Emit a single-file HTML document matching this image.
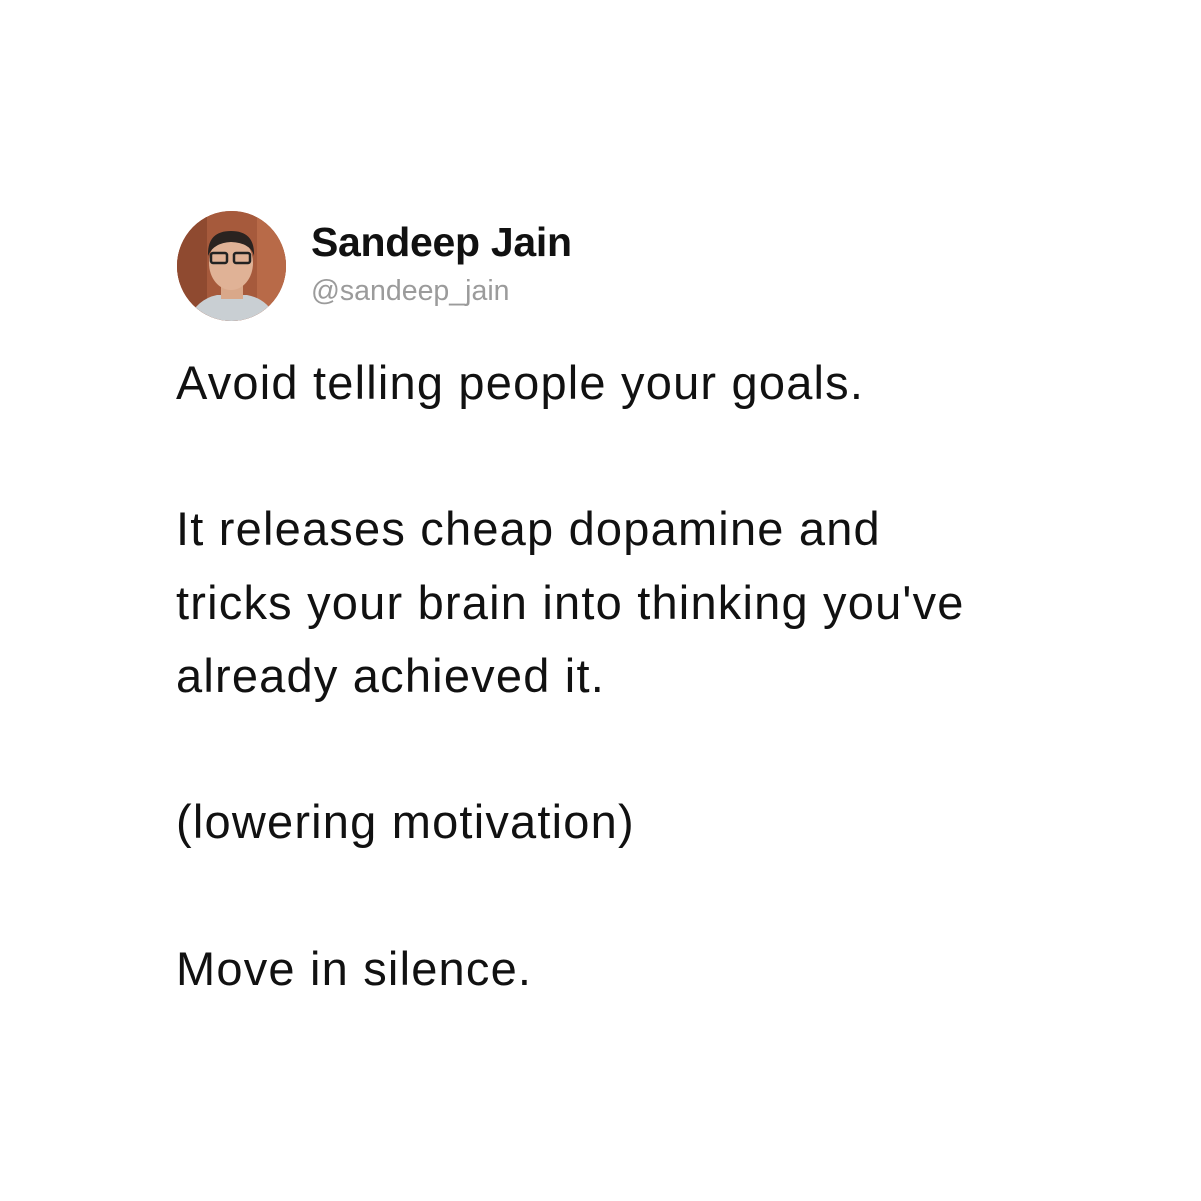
<!DOCTYPE html>
<html><head><meta charset="utf-8"><style>
html,body{margin:0;padding:0;background:#fff;width:1201px;height:1201px;overflow:hidden}
body{position:relative;font-family:"Liberation Sans",Arial,sans-serif;color:#111}
.av{position:absolute;left:177px;top:211px;width:109px;height:110px;border-radius:50%;overflow:hidden;background:#a8583a}
.name{position:absolute;left:311px;top:219px;font-size:41px;font-weight:bold;letter-spacing:-0.3px;color:#111}
.handle{position:absolute;left:311px;top:275px;font-size:28.5px;color:#9b9b9b}
.txt{position:absolute;left:176px;top:346px;font-size:47px;letter-spacing:1.2px;line-height:73.2px;color:#111}
</style></head><body>
<div class="av"><svg width="109" height="110" viewBox="0 0 109 110">
<rect width="109" height="110" fill="#a65a3c"/>
<rect x="0" y="0" width="30" height="110" fill="#8f4a30"/>
<rect x="80" y="0" width="29" height="110" fill="#b86a48"/>
<path d="M10 110 Q20 88 40 84 L70 84 Q92 88 100 110Z" fill="#c9cfd3"/>
<rect x="44" y="70" width="22" height="18" fill="#d9a88a"/>
<ellipse cx="54" cy="52" rx="22" ry="27" fill="#e0b296"/>
<path d="M31 45 Q30 20 54 20 Q78 20 77 45 Q74 32 54 31 Q36 32 31 45Z" fill="#2a2320"/>
<rect x="34" y="42" width="16" height="10" rx="2" fill="none" stroke="#222" stroke-width="2.5"/>
<rect x="57" y="42" width="16" height="10" rx="2" fill="none" stroke="#222" stroke-width="2.5"/>
</svg></div>
<div class="name">Sandeep Jain</div>
<div class="handle">@sandeep_jain</div>
<div class="txt">Avoid telling people your goals.<br><br>It releases cheap dopamine and<br>tricks your brain into thinking you've<br>already achieved it.<br><br>(lowering motivation)<br><br>Move in silence.</div>
</body></html>
